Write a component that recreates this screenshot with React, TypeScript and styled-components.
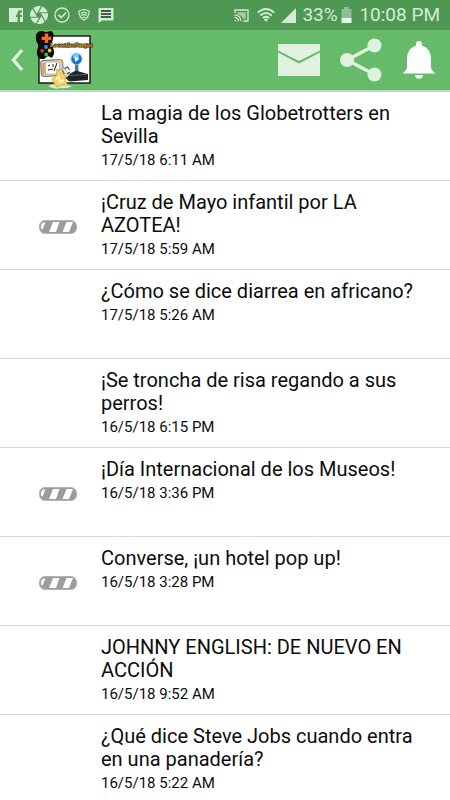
import React from "react";
import styled, { createGlobalStyle } from "styled-components";

const GlobalStyle = createGlobalStyle`
  * { box-sizing: border-box; }
  html, body { margin: 0; background: #fff; }
  body { font-family: Roboto, "Liberation Sans", sans-serif; color: #0c0c0c; }
`;

const Page = styled.div`
  display: flex;
  flex-direction: column;
  height: 100vh;
`;

const StatusBar = styled.div`
  flex: none;
  display: flex;
  align-items: center;
  justify-content: space-between;
  height: 30px;
  padding: 0 10px 0 8px;
  background: #4f9854;
  color: #d3ebd4;
`;

const StatusGroup = styled.div<{ $gap: number }>`
  display: flex;
  align-items: center;
  gap: ${(p) => p.$gap}px;
  font-size: 19px;
  line-height: 24px;
  white-space: nowrap;
`;

const Icon = styled.svg`
  display: block;
  flex: none;
`;

const Header = styled.header`
  flex: none;
  display: flex;
  align-items: center;
  justify-content: space-between;
  height: 62px;
  padding: 0 14px 0 8px;
  background: #66bb6a;
  border-bottom: 2px solid #c3d8c4;
`;

const HeaderGroup = styled.div<{ $gap: number }>`
  display: flex;
  align-items: center;
  gap: ${(p) => p.$gap}px;
`;

const IconButton = styled.button`
  padding: 0;
  border: 0;
  background: none;
  color: #dff2e0;
  cursor: pointer;
`;

const List = styled.ul`
  flex: 1;
  min-height: 0;
  margin: 0;
  padding: 0;
  list-style: none;
  overflow-y: auto;
  scrollbar-width: none;
`;

const Row = styled.li`
  display: grid;
  grid-template-columns: 101px 1fr;
  min-height: 89px;
  border-bottom: 1px solid #d9d9d9;
`;

const Thumb = styled.div`
  display: flex;
  align-items: center;
  padding: 4px 0 0 39px;
`;

const Body = styled.div`
  padding: 10px 32px 0 0;
`;

const Title = styled.h2`
  margin: 0;
  font-size: 20px;
  font-weight: 400;
  line-height: 23px;
`;

const Stamp = styled.time`
  display: block;
  margin-top: 3px;
  font-size: 15px;
  line-height: 18px;
`;

const items = [
  { title: "La magia de los Globetrotters en Sevilla", date: "17/5/18 6:11 AM", loading: false },
  { title: "¡Cruz de Mayo infantil por LA AZOTEA!", date: "17/5/18 5:59 AM", loading: true },
  { title: "¿Cómo se dice diarrea en africano?", date: "17/5/18 5:26 AM", loading: false },
  { title: "¡Se troncha de risa regando a sus perros!", date: "16/5/18 6:15 PM", loading: false },
  { title: "¡Día Internacional de los Museos!", date: "16/5/18 3:36 PM", loading: true },
  { title: "Converse, ¡un hotel pop up!", date: "16/5/18 3:28 PM", loading: true },
  { title: "JOHNNY ENGLISH: DE NUEVO EN ACCIÓN", date: "16/5/18 9:52 AM", loading: false },
  { title: "¿Qué dice Steve Jobs cuando entra en una panadería?", date: "16/5/18 5:22 AM", loading: false },
];

const FacebookIcon = () => (
  <Icon width="16" height="16" viewBox="0 0 16 16">
    <path fill="currentColor" d="M1 1h14v14h-3V10h1.800V7.800H12V6.500q0-1 1-1h1V3.300h-1.800q-2.700 0-2.700 3v1.500H8V10h1.500v5H1z" />
  </Icon>
);

const ShutterIcon = () => (
  <Icon width="18" height="18" viewBox="2 2 20 20">
    <path
      fill="currentColor"
      d="M9.400 10.500l4.770-8.260C13.470 2.090 12.750 2 12 2c-2.400 0-4.600.85-6.320 2.250l3.660 6.350.06-.1zM21.540 9c-.92-2.920-3.150-5.260-6-6.340L11.880 9h9.660zm.26 1h-7.490l.29.5 4.760 8.250C21 16.970 22 14.610 22 12c0-.69-.07-1.350-.2-2zM8.540 12l-3.900-6.750C3.010 7.030 2 9.390 2 12c0 .69.07 1.350.2 2h7.490l-1.150-2zm-6.080 3c.92 2.920 3.150 5.260 6 6.340L12.120 15H2.460zm11.270 0l-3.900 6.760c.7.150 1.420.24 2.170.24 2.400 0 4.600-.85 6.320-2.250l-3.660-6.350-.93 1.600z"
    />
  </Icon>
);

const CheckCircleIcon = () => (
  <Icon width="16" height="16" viewBox="0 0 16 16" fill="none" stroke="currentColor" strokeWidth="1.300">
    <circle cx="8" cy="8" r="7" />
    <path d="M4.500 7.800l2.700 2.700 5-5" strokeWidth="1.700" />
  </Icon>
);

const ShieldIcon = () => (
  <Icon width="16" height="12" viewBox="-2 0 16 12" fill="none" stroke="currentColor">
    <path d="M.8 2.200Q6-.8 11.200 2.200 11 8.500 6 11.300 1 8.500.8 2.200z" strokeWidth="1.200" />
    <path d="M2.800 4.400q3.200-2 6.400 0M3.300 6.500q2.700-1.700 5.400 0M4.500 8.500q1.500-1 3 0" strokeWidth="1.200" />
  </Icon>
);

const MessageIcon = () => (
  <Icon width="16" height="15" viewBox="0 0 16 15">
    <path fill="currentColor" d="M1.500 0h13q1 0 1 1v10.500q0 1-1 1H4L.5 15V1q0-1 1-1z" />
    <path d="M3 3h10M3 6h10M3 9h10" stroke="#17301a" strokeWidth="1.400" />
  </Icon>
);

const CastIcon = () => (
  <Icon width="15" height="13" viewBox="0 0 15 13" fill="none" stroke="currentColor" strokeWidth="1.300">
    <path d="M1 4V1h13v11H9.500" />
    <path d="M3.500 3.200h8.300v6.500H9Q7.500 6 3.500 5z" fill="currentColor" stroke="none" opacity=".65" />
    <path d="M.5 5.800q6 .3 6.500 6.500M.5 8.300q3.500.3 4 4" />
    <circle cx="1.300" cy="11.600" r=".8" fill="currentColor" stroke="none" />
  </Icon>
);

const WifiIcon = () => (
  <Icon width="18" height="14" viewBox="0 0 18 14" fill="none" stroke="currentColor" strokeWidth="1.900">
    <path d="M.7 4.600Q9-2.600 17.300 4.600M3.300 7.400Q9 2.600 14.700 7.400M5.900 10.100Q9 7.600 12.100 10.100" />
    <path d="M9 13.800l-2.200-2.400q2.200-1.600 4.400 0z" fill="currentColor" stroke="none" />
  </Icon>
);

const SignalIcon = () => (
  <Icon width="15" height="15" viewBox="0 0 15 15">
    <path d="M15 0v15H0z" fill="currentColor" />
  </Icon>
);

const BatteryIcon = () => (
  <Icon width="11" height="17" viewBox="0 0 11 17">
    <path d="M3 0h5v2h2.500v9H.5V2H3z" fill="#8fc093" />
    <path d="M.5 11h10v5H.5z" fill="#e8f6e9" />
  </Icon>
);

const BackIcon = () => (
  <Icon width="18" height="26" viewBox="0 0 18 26">
    <path d="M14 3L5.500 13l8.500 10" fill="none" stroke="#dff2e0" strokeWidth="3.400" />
  </Icon>
);

const AppLogo = () => (
  <Icon width="60" height="60" viewBox="0 2 60 60" role="img" aria-label="Logo">
    <rect x="5" y="8" width="51" height="47" fill="#fff" stroke="#111" strokeWidth="1.400" />
    <path d="M14 58q9-5 24 0-4 3-11 2-7 2-13-2z" fill="#d5e9cf" />
    <rect x="7" y="32" width="22" height="16" rx="3" fill="#d2d2ce" stroke="#6f6d68" transform="rotate(-3 18 40)" />
    <path d="M9.500 35v11" stroke="#e79139" strokeWidth="2" />
    <rect x="11.500" y="34" width="14" height="12" fill="#fff" stroke="#b8a37c" strokeWidth=".7" />
    <path d="M14 38l2-1M19 36v3M14 42l5-1M23 35l-3 8" stroke="#333" strokeWidth="1.100" />
    <path d="M26 31l3 4" stroke="#e5a74a" strokeWidth="2" />
    <circle cx="42.500" cy="30.500" r="6.300" fill="#b4dcff" />
    <circle cx="42.500" cy="31" r="5.200" fill="#1f6fd0" />
    <circle cx="42" cy="28.500" r="3" fill="#70c8ff" />
    <path d="M41 28.200l4.300 2.900-4.300 3z" fill="#fff" />
    <path d="M41 36.500h3.400V45H41z" fill="#4b7795" />
    <path d="M36 45.500l4-2q2.500-1.500 5 0l9 2.500v6l-18 1.500-4-3z" fill="#20242a" />
    <path d="M35 47.500l18-1" stroke="#59636c" />
    <path d="M24 43l6-3 5 7-5 5z" fill="#f3ecc4" stroke="#8a815f" strokeWidth=".6" />
    <path d="M28 42l2.500 4M31 48l4 5M30.500 40.500l3-1.500 2 3M33 46l3-2M31 54l3 2" stroke="#444" strokeWidth="1.100" fill="none" />
    <path d="M23 41l4 4 5 3-1 4 3 5-6 0-5 2-3-4-2-4 4-3z" fill="#f3d461" stroke="#c99b26" strokeWidth=".7" />
    <path d="M22 51l3-2 1 5 4-2" fill="none" stroke="#fff8d0" strokeWidth="1.800" />
    <path d="M2 7q1-4 6-4l4 1 5-1q3 1 2.500 5l-1 5q-2 3-1 5 3 3 2.500 8l-2 4-4-2-4 3H6q-4-3-3-9l2-4Q1 13 2 7z" fill="#0d0d0d" />
    <path d="M10.800 5.500h3.400v3.200h3.200v3.300h-3.200v3h-3.400v-3H7.600V8.700h3.200z" fill="#f26a32" />
    <circle cx="12" cy="19" r="1.900" fill="#3b8dfa" />
    <circle cx="8.200" cy="22.800" r="1.900" fill="#ea3434" />
    <circle cx="15.600" cy="22.500" r="1.900" fill="#f0ca34" />
    <circle cx="12.200" cy="26.500" r="1.900" fill="#36c447" />
    <text
      x="16"
      y="19"
      fontFamily="Liberation Serif, serif"
      fontSize="6"
      fontWeight="700"
      fill="#e6b735"
      stroke="#17120a"
      strokeWidth="1.200"
      paintOrder="stroke"
    >
      LocosxlosJuegos
    </text>
  </Icon>
);

const MailIcon = () => (
  <Icon width="42" height="32" viewBox="0 0 42 32" fill="currentColor">
    <path d="M0 0h42v6.500L21 17 0 6.500z" />
    <path d="M0 8.500l21 11L42 8.500V32H0z" />
  </Icon>
);

const ShareIcon = () => (
  <Icon width="42" height="44" viewBox="0 0 42 44" fill="currentColor">
    <path d="M34.500 7.500L7 22l27.500 14.500" fill="none" stroke="currentColor" strokeWidth="3.500" />
    <circle cx="34.500" cy="7.500" r="7" />
    <circle cx="7" cy="22" r="7" />
    <circle cx="34.500" cy="36.500" r="7" />
  </Icon>
);

const BellIcon = () => (
  <Icon width="34" height="38" viewBox="0 0 34 38" fill="#fbfefb">
    <path d="M14 4.500V3q0-3 3-3t3 3v1.500q9 3 9 13V26q0 3 4.500 6.500H.5Q5 29 5 26v-8.500q0-10 9-13z" />
    <path d="M13 34h8q-.5 4-4 4t-4-4z" opacity=".85" />
  </Icon>
);

const LoadingPill = () => (
  <Icon width="38" height="14" viewBox="0 0 38 14">
    <rect x=".5" y=".5" width="37" height="13" rx="5.500" fill="#9c9c9c" stroke="#b4b4b4" />
    <path d="M2 8.500V6q0-3 3-3.500h1.500L3.500 9.500zM14 2h6.500L17 12h-7zM27.500 2H34l-4 10h-6.500z" fill="#fff" />
  </Icon>
);

export default function App() {
  return (
    <Page>
      <GlobalStyle />
      <StatusBar>
        <StatusGroup $gap={6}>
          <FacebookIcon />
          <ShutterIcon />
          <CheckCircleIcon />
          <ShieldIcon />
          <MessageIcon />
        </StatusGroup>
        <StatusGroup $gap={6}>
          <StatusGroup $gap={8}>
            <CastIcon />
            <WifiIcon />
          </StatusGroup>
          <SignalIcon />
          <StatusGroup $gap={3}>
            <span>33%</span>
            <BatteryIcon />
            <span>&nbsp;10:08 PM</span>
          </StatusGroup>
        </StatusGroup>
      </StatusBar>
      <Header>
        <HeaderGroup $gap={8}>
          <IconButton aria-label="Atrás">
            <BackIcon />
          </IconButton>
          <AppLogo />
        </HeaderGroup>
        <HeaderGroup $gap={20}>
          <IconButton aria-label="Correo">
            <MailIcon />
          </IconButton>
          <IconButton aria-label="Compartir">
            <ShareIcon />
          </IconButton>
          <IconButton aria-label="Notificaciones">
            <BellIcon />
          </IconButton>
        </HeaderGroup>
      </Header>
      <List>
        {items.map((item) => (
          <Row key={item.title}>
            <Thumb>{item.loading && <LoadingPill />}</Thumb>
            <Body>
              <Title>{item.title}</Title>
              <Stamp>{item.date}</Stamp>
            </Body>
          </Row>
        ))}
      </List>
    </Page>
  );
}
